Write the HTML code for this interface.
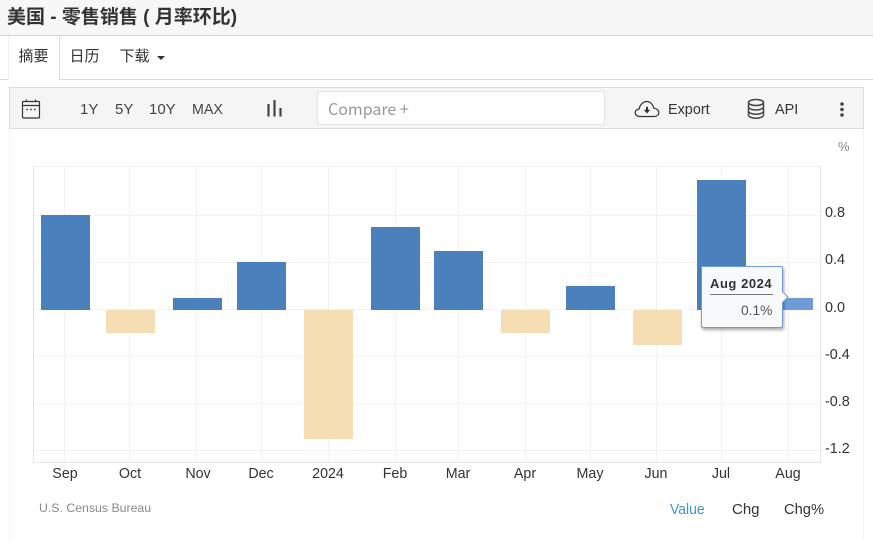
<!DOCTYPE html>
<html><head><meta charset="utf-8">
<style>
html,body{margin:0;padding:0;background:#fff}
body{width:873px;height:540px;position:relative;overflow:hidden;font-family:"Liberation Sans","Noto Sans CJK SC",sans-serif;color:#333}
.a{position:absolute;white-space:nowrap}
.x{position:absolute;top:465px;width:60px;margin-left:-30px;text-align:center;font-size:15px;line-height:18px;color:#333;transform:scaleX(.95)}
.y{position:absolute;left:825px;font-size:15px;line-height:18px;color:#333;transform:scaleX(.96);transform-origin:0 0}
.tb{position:absolute;top:101px;font-size:15px;line-height:18px;color:#444}
.cj{position:absolute;top:48px;font-size:15px;line-height:18px;color:#333;white-space:nowrap}
</style></head><body>
<div class="a" style="left:0;top:0;width:873px;height:35px;background:#f7f7f7;border-bottom:1px solid #d4d4d4"></div>
<div class="a" style="left:7px;top:5px;font-size:19px;line-height:26px;font-weight:bold;color:#333">美国 - 零售销售 ( 月率环比)</div>

<div class="a" style="left:0;top:79px;width:873px;height:1px;background:#d9d9d9"></div>
<div class="a" style="left:8px;top:36px;width:52px;height:44px;background:#fff;border-right:1px solid #ddd;border-left:1px solid #f0f0f0;box-sizing:border-box"></div>
<div class="cj" style="left:18.500px">摘要</div>
<div class="cj" style="left:69.500px">日历</div>
<div class="cj" style="left:119.500px">下载</div>
<div class="a" style="left:157px;top:56px;width:0;height:0;border-left:4px solid transparent;border-right:4px solid transparent;border-top:4px solid #333"></div>

<div class="a" style="left:9px;top:87px;width:855px;height:42px;box-sizing:border-box;background:#f5f5f5;border:1px solid #dedede"></div>
<svg class="a" style="left:21px;top:98px" width="20" height="22" viewBox="0 0 20 22" fill="none" stroke="#333" stroke-width="1.2">
<rect x="1.500" y="3.500" width="17" height="16.500" rx="1"/><path d="M1.500 7.500H18.500M5.500 1.500V4M14.500 1.500V4"/><path d="M5.500 11.500h1.500M9.200 11.500h1.500M13 11.500h1.500" stroke-width="1.500"/></svg>
<div class="tb" style="left:80px">1Y</div>
<div class="tb" style="left:115px">5Y</div>
<div class="tb" style="left:149px">10Y</div>
<div class="tb" style="left:192px;transform:scaleX(.95);transform-origin:0 0">MAX</div>
<svg class="a" style="left:265px;top:100px" width="18" height="17"><path d="M3.500 4v12.500M9.500 0v16.500M15.500 8v8.500" stroke="#444" stroke-width="2.200" fill="none"/></svg>
<div class="a" style="left:317px;top:91px;width:288px;height:34px;box-sizing:border-box;background:#fff;border:1px solid #e2e2e2;border-radius:2px"></div>
<div class="a" style="left:328px;top:98px;font-family:'Noto Sans CJK SC',sans-serif;font-size:16px;line-height:20px;color:#999">Compare +</div>
<svg class="a" style="left:634px;top:99px" width="26" height="20" viewBox="0 0 26 20" fill="none" stroke="#333" stroke-width="1.200">
<path d="M6 17.500C3 17.500 1.200 15.800 1.200 13.600C1.200 11.500 3 10.200 5 10.200C5.600 6.500 8.700 2.500 12.800 2.500C16.600 2.500 19.200 6.200 19.800 9.200C22.800 9.500 24.800 11.300 24.800 13.600C24.800 16 22.800 17.500 20 17.500Z"/>
<path d="M13 7.800V11.500" stroke-width="2"/><path d="M9.800 10.800H16.200L13 14.500Z" fill="#333" stroke="none"/></svg>
<div class="a" style="left:668px;top:101px;font-size:15px;line-height:18px;color:#333;transform:scaleX(.96);transform-origin:0 0">Export</div>
<svg class="a" style="left:746px;top:98px" width="20" height="22" viewBox="0 0 20 22" fill="none" stroke="#444" stroke-width="1.500">
<ellipse cx="10" cy="4.500" rx="7.500" ry="3"/><path d="M2.500 4.500V17c0 1.800 3.400 3.200 7.500 3.200s7.500-1.400 7.500-3.200V4.500"/><path d="M2.500 8.800c0 1.800 3.400 3.200 7.500 3.200s7.500-1.400 7.500-3.200M2.500 13c0 1.800 3.400 3.200 7.500 3.200s7.500-1.400 7.500-3.200"/></svg>
<div class="a" style="left:775px;top:101px;font-size:15px;line-height:18px;color:#333;transform:scaleX(.96);transform-origin:0 0">API</div>
<svg class="a" style="left:838px;top:100px" width="8" height="18"><circle cx="4" cy="4" r="1.800" fill="#444"/><circle cx="4" cy="9.500" r="1.800" fill="#444"/><circle cx="4" cy="15" r="1.800" fill="#444"/></svg>

<div class="a" style="left:9px;top:129px;width:1px;height:411px;background:#f4f4f4"></div>
<div class="a" style="left:863px;top:129px;width:1px;height:411px;background:#f4f4f4"></div>

<svg class="a" style="left:0;top:0" width="873" height="540">
<g stroke="#f2f2f2" stroke-width="1" fill="none" shape-rendering="crispEdges">
<path d="M33 166.500H821M33 215.500H821M33 262.500H821M33 309.500H821M33 356.500H821M33 403.500H821M33 450.500H821"/>
<path d="M64.500 166V462M129.500 166V462M196.500 166V462M261.500 166V462M328.500 166V462M395.500 166V462M458.500 166V462M525.500 166V462M590.500 166V462M656.500 166V462M721.500 166V462M788.500 166V462"/>
</g>
<g stroke="#e4e4e4" fill="none" shape-rendering="crispEdges">
<path d="M33.500 166V462.500H821M820.500 166V462"/>
</g>
<g shape-rendering="crispEdges">
<g fill="#4a81bd">
<rect x="41" y="215" width="49" height="95"/>
<rect x="173" y="298" width="49" height="12"/>
<rect x="237" y="262" width="49" height="48"/>
<rect x="371" y="227" width="49" height="83"/>
<rect x="434" y="251" width="49" height="59"/>
<rect x="566" y="286" width="49" height="24"/>
<rect x="697" y="180" width="49" height="130"/>
</g>
<g fill="#f5deb3">
<rect x="106" y="310" width="49" height="23"/>
<rect x="304" y="310" width="49" height="129"/>
<rect x="501" y="310" width="49" height="23"/>
<rect x="633" y="310" width="49" height="35"/>
</g>
<rect x="764" y="298" width="49" height="12" fill="#6f9bd8"/>
</g>
</svg>

<div class="a" style="left:838px;top:139px;font-size:13px;line-height:16px;color:#888">%</div>
<div class="y" style="top:204px">0.8</div>
<div class="y" style="top:251px">0.4</div>
<div class="y" style="top:299px">0.0</div>
<div class="y" style="top:346px">-0.4</div>
<div class="y" style="top:393px">-0.8</div>
<div class="y" style="top:440px">-1.2</div>

<div class="x" style="left:65px">Sep</div>
<div class="x" style="left:130px">Oct</div>
<div class="x" style="left:197.500px">Nov</div>
<div class="x" style="left:261px">Dec</div>
<div class="x" style="left:328px">2024</div>
<div class="x" style="left:395px">Feb</div>
<div class="x" style="left:458px">Mar</div>
<div class="x" style="left:525px">Apr</div>
<div class="x" style="left:590px">May</div>
<div class="x" style="left:656px">Jun</div>
<div class="x" style="left:721px">Jul</div>
<div class="x" style="left:788px">Aug</div>

<div class="a" style="left:701px;top:266px;width:82px;height:62px;box-sizing:border-box;background:#f7f9fb;border:1px solid #6f9bd8;border-radius:2px;box-shadow:1px 2px 3px rgba(0,0,0,.35)"></div>
<div class="a" style="left:779px;top:293px;width:8px;height:8px;background:#f7f9fb;border-top:1px solid #6f9bd8;border-right:1px solid #6f9bd8;transform:rotate(45deg);box-sizing:border-box"></div>
<div class="a" style="left:710px;top:276px;font-size:13px;line-height:16px;font-weight:bold;color:#333;letter-spacing:.55px">Aug 2024</div>
<div class="a" style="left:710px;top:294px;width:63px;height:1px;background:#777"></div>
<div class="a" style="left:741px;top:303px;font-size:13.800px;line-height:16px;color:#555">0.1%</div>

<div class="a" style="left:39px;top:501px;font-size:12.300px;line-height:15px;color:#8a8a8a">U.S. Census Bureau</div>
<div class="a" style="left:670px;top:501px;font-size:15px;line-height:18px;color:#3f94cc;transform:scaleX(.93);transform-origin:0 0">Value</div>
<div class="a" style="left:732px;top:501px;font-size:15px;line-height:18px;color:#333">Chg</div>
<div class="a" style="left:784px;top:501px;font-size:15px;line-height:18px;color:#333;transform:scaleX(.98);transform-origin:0 0">Chg%</div>
</body></html>
